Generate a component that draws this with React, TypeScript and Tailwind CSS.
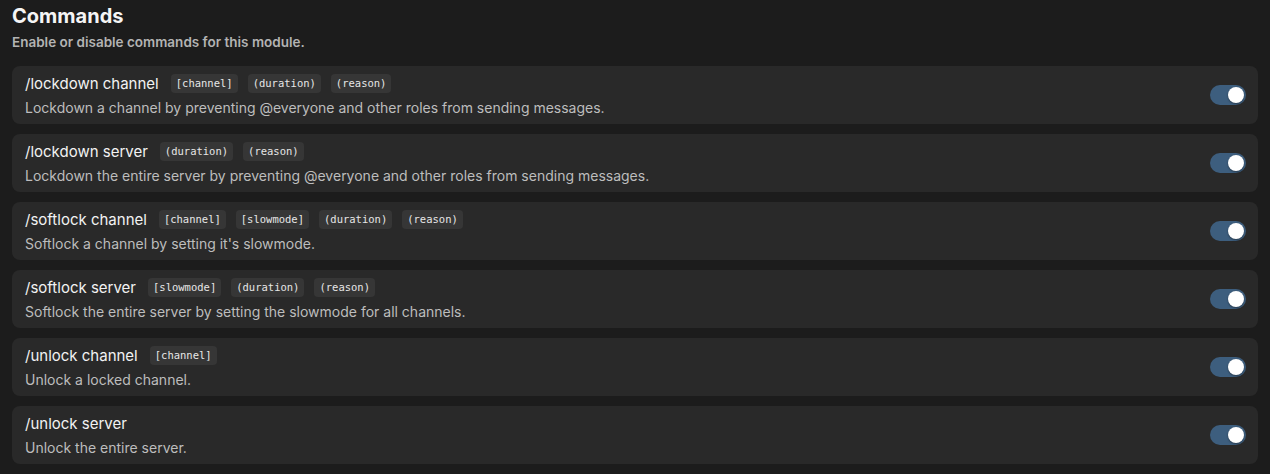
import * as React from "react";

type Command = {
  name: string;
  args: string[];
  description: string;
};

const commands: Command[] = [
  {
    name: "/lockdown channel",
    args: ["[channel]", "(duration)", "(reason)"],
    description:
      "Lockdown a channel by preventing @everyone and other roles from sending messages.",
  },
  {
    name: "/lockdown server",
    args: ["(duration)", "(reason)"],
    description:
      "Lockdown the entire server by preventing @everyone and other roles from sending messages.",
  },
  {
    name: "/softlock channel",
    args: ["[channel]", "[slowmode]", "(duration)", "(reason)"],
    description: "Softlock a channel by setting it's slowmode.",
  },
  {
    name: "/softlock server",
    args: ["[slowmode]", "(duration)", "(reason)"],
    description:
      "Softlock the entire server by setting the slowmode for all channels.",
  },
  {
    name: "/unlock channel",
    args: ["[channel]"],
    description: "Unlock a locked channel.",
  },
  {
    name: "/unlock server",
    args: [],
    description: "Unlock the entire server.",
  },
];

function Toggle({ on, onChange }: { on: boolean; onChange: () => void }) {
  return (
    <button
      type="button"
      onClick={onChange}
      className={
        "flex h-[20px] w-[36px] items-center rounded-full px-[2px] transition " +
        (on ? "justify-end bg-[#3d5e7e]" : "justify-start bg-[#4a4a4a]")
      }>
      <span className="h-[16px] w-[16px] rounded-full bg-white shadow-[0_1px_2px_rgba(0,0,0,0.4)]" />
    </button>
  );
}

function CommandRow({ cmd }: { cmd: Command }) {
  const [on, setOn] = React.useState(true);
  return (
    <div className="flex h-[58px] items-center rounded-[8px] bg-[#292929] pl-[13px] pr-[12px]">
      <div className="flex flex-1 flex-col gap-[5px]">
        <div className="flex items-center gap-[10px]">
          <span className="mr-[2px] text-[15px] leading-[20px] text-[#f2f2f2]">
            {cmd.name}
          </span>
          {cmd.args.map((a) => (
            <span
              key={a}
              className="rounded-[4px] bg-[#363636] px-[5px] font-['DejaVu_Sans_Mono',monospace] text-[10.5px] leading-[19px] text-[#e6e6e6]">
              {a}
            </span>
          ))}
        </div>
        <div className="text-[14px] leading-[18px] text-[#bdbdbd]">
          {cmd.description}
        </div>
      </div>
      <Toggle on={on} onChange={() => setOn(!on)} />
    </div>
  );
}

export default function App() {
  return (
    <div className="min-h-[474px] bg-[#1c1c1c] px-[12px] pb-[10px] font-['Inter',sans-serif]">
      <h2 className="pt-[4px] text-[20px] font-bold leading-[24px] text-[#f5f5f5]">
        Commands
      </h2>
      <p className="mt-[5px] text-[13.5px] font-semibold leading-[18px] text-[#b3b3b3]">
        Enable or disable commands for this module.
      </p>
      <div className="mt-[15px] flex flex-col gap-[10px]">
        {commands.map((c) => (
          <CommandRow key={c.name} cmd={c} />
        ))}
      </div>
    </div>
  );
}
